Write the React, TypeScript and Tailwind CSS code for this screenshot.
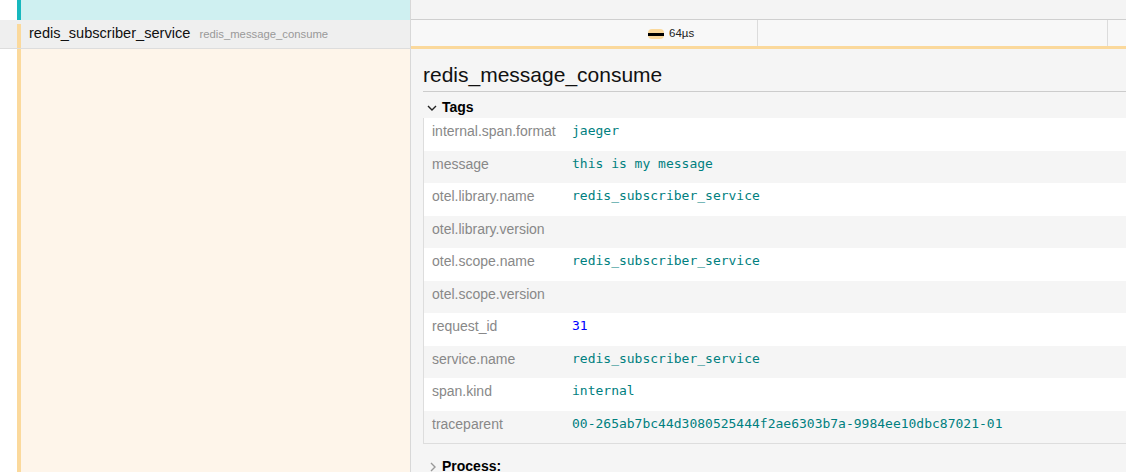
import React from 'react';

type Tag = { key: string; value: string; kind?: 'num' };

const tags: Tag[] = [
  { key: 'internal.span.format', value: 'jaeger' },
  { key: 'message', value: 'this is my message' },
  { key: 'otel.library.name', value: 'redis_subscriber_service' },
  { key: 'otel.library.version', value: '' },
  { key: 'otel.scope.name', value: 'redis_subscriber_service' },
  { key: 'otel.scope.version', value: '' },
  { key: 'request_id', value: '31', kind: 'num' },
  { key: 'service.name', value: 'redis_subscriber_service' },
  { key: 'span.kind', value: 'internal' },
  { key: 'traceparent', value: '00-265ab7bc44d3080525444f2ae6303b7a-9984ee10dbc87021-01' },
];

const Chevron: React.FC<{ dir: 'down' | 'right'; className?: string }> = ({ dir, className }) => (
  <svg width="12" height="12" viewBox="0 0 12 12" className={className} fill="none" stroke="currentColor" strokeWidth="1.4">
    {dir === 'down' ? <path d="M2 4l4 4 4-4" /> : <path d="M4 2l4 4-4 4" />}
  </svg>
);

export default function App() {
  return (
    <div
      className="w-[1126px] h-[472px] overflow-hidden flex flex-col bg-white"
      style={{ fontFamily: '"Liberation Sans", Arial, sans-serif' }}
    >
      {/* previous span row */}
      <div className="flex h-[20px] shrink-0">
        <div className="w-[411px] flex border-r border-[#d8d8d8]">
          <div className="w-[17px] bg-white" />
          <div className="w-[4px] bg-[#17b8be]" />
          <div className="flex-1 bg-[#cff0f1]" />
        </div>
        <div className="flex-1 bg-[#f4f4f4] border-b border-[#cfcfcf]" />
      </div>

      {/* selected span row */}
      <div className="flex h-[29px] shrink-0">
        <div className="w-[411px] flex bg-[#efefef] border-r border-[#d8d8d8] border-b border-b-[#dddddd]">
          <div className="w-[17px]" />
          <div className="w-[4px] flex flex-col">
            <div className="h-[4px]" />
            <div className="flex-1 bg-[#fbd99c]" />
          </div>
          <div className="flex-1 flex items-center pl-[8px] whitespace-nowrap">
            <span className="text-[14.6px] text-[#111]">redis_subscriber_service</span>
            <span className="ml-[9px] text-[11.3px] text-[#999]">redis_message_consume</span>
          </div>
        </div>
        <div className="flex-1 flex bg-[#f8f8f8] border-b-[3px] border-[#fbd99c]">
          <div className="w-[347px] flex items-center pt-[2px] pl-[237px] border-r border-[#dcdcdc]">
            <div className="w-[16px] h-[10px] rounded-[4px] bg-[#fbd99c] flex items-center">
              <div className="w-full h-[3px] bg-black" />
            </div>
            <span className="ml-[5px] text-[11.5px] text-[#222]">64µs</span>
          </div>
          <div className="w-[350px] border-r border-[#dcdcdc]" />
          <div className="flex-1" />
        </div>
      </div>

      {/* detail area */}
      <div className="flex flex-1 min-h-0">
        <div className="w-[411px] flex border-r border-[#d8d8d8]">
          <div className="w-[17px] bg-white" />
          <div className="w-[4px] bg-[#fbd99c]" />
          <div className="flex-1 bg-[#fef5ea]" />
        </div>
        <div className="flex-1 bg-[#f5f5f5] pl-[12px] pt-[14px] flex flex-col">
          <div className="border-b border-[#cccccc] pb-[4px]">
            <h1 className="text-[21px] leading-[24px] text-[#111]">redis_message_consume</h1>
          </div>
          <div className="h-[29px] flex items-center pt-[5px] pl-[3px] text-black">
            <Chevron dir="down" className="text-[#222]" />
            <span className="ml-[4px] text-[14px] font-bold">Tags</span>
          </div>
          <div className="border-l border-b border-[#dddddd]">
            {tags.map((t, i) => (
              <div
                key={t.key}
                className={`flex h-[32.5px] ${i % 2 === 0 ? 'bg-white' : 'bg-[#f5f5f5]'}`}
              >
                <div className="w-[148px] pl-[8px] pt-[3px] leading-[20px] text-[14px] text-[#888]">{t.key}</div>
                <div
                  className={`pt-[3px] leading-[20px] text-[13px] whitespace-nowrap ${t.kind === 'num' ? 'text-[#0000ff]' : 'text-[#008080]'}`}
                  style={{ fontFamily: '"DejaVu Sans Mono", monospace' }}
                >
                  {t.value}
                </div>
              </div>
            ))}
          </div>
          <div className="mt-[12px] flex items-center pl-[4px]">
            <Chevron dir="right" className="text-[#999]" />
            <span className="ml-[3px] text-[14px] font-bold text-black">Process:</span>
          </div>
        </div>
      </div>
    </div>
  );
}
